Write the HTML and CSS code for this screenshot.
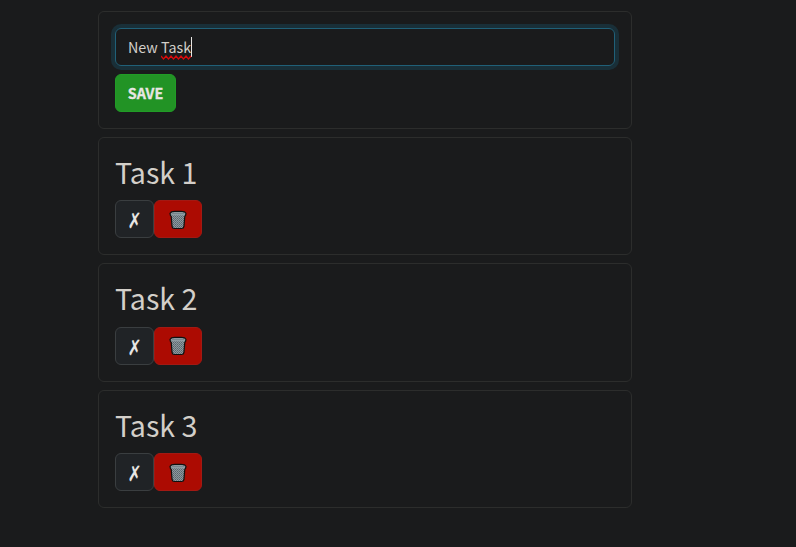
FILE: index.html
```html
<!DOCTYPE html>
<html lang="en">
<head>
<meta charset="utf-8">
<title>Tasks</title>
<link rel="stylesheet" href="styles.css">
</head>
<body>
<svg class="defs" width="0" height="0" aria-hidden="true">
  <defs>
    <pattern id="mesh" width="2" height="2" patternUnits="userSpaceOnUse">
      <rect width="2" height="2" fill="#8d999f"/>
      <rect width="1" height="1" fill="#5a666c"/>
      <rect x="1" y="1" width="1" height="1" fill="#66727a"/>
    </pattern>
    <symbol id="trash" viewBox="0 0 18 20">
      <path d="M1 3.4 2.4 1.9 6 1.3h6l3.6.6L17 3.4l-.4 2-.8.9-.9 10.4c-.2 1.2-1 1.8-2.1 1.8H5.2c-1.1 0-1.9-.6-2.1-1.8L2.2 6.3l-.8-.9z" fill="url(#mesh)" stroke="#101010" stroke-width="1.2" stroke-linejoin="round"/>
      <path d="M2 3.2 5.3 2.1h7.4L16 3.2l-.4 2H2.4z" fill="#8e9ca3"/>
      <path d="M3 3.4h12" stroke="#6b797f" stroke-width=".7"/>
    </symbol>
  </defs>
</svg>
<main class="list">
  <form class="card form">
    <div class="input" role="textbox"><span>New&nbsp;</span><span class="misspelt">Task<svg class="wave" width="31" height="5" viewBox="0 0 31 5"><path d="M0 1 2.5 4 5 1 7.5 4 10 1 12.5 4 15 1 17.5 4 20 1 22.5 4 25 1 27.5 4 30 1" fill="none" stroke="#d80b0b" stroke-width="1.2"/></svg></span><span class="caret"></span></div>
    <button type="button" class="btn save">SAVE</button>
  </form>
  <article class="card">
    <h2>Task 1</h2>
    <div class="actions"><button class="btn mark"><span class="cross">✗</span></button><button class="btn delete" aria-label="Delete"><svg class="icon"><use href="#trash"/></svg></button></div>
  </article>
  <article class="card">
    <h2>Task 2</h2>
    <div class="actions"><button class="btn mark"><span class="cross">✗</span></button><button class="btn delete" aria-label="Delete"><svg class="icon"><use href="#trash"/></svg></button></div>
  </article>
  <article class="card">
    <h2>Task 3</h2>
    <div class="actions"><button class="btn mark"><span class="cross">✗</span></button><button class="btn delete" aria-label="Delete"><svg class="icon"><use href="#trash"/></svg></button></div>
  </article>
</main>
</body>
</html>
```

FILE: styles.css
```css
* { box-sizing: border-box; }
body {
  margin: 0;
  background: #1a1b1c;
  color: #d3cfc9;
  font-family: "Noto Sans CJK JP", "Noto Sans", sans-serif;
  font-size: 14.3px;
}
.defs { position: absolute; }
.list {
  width: 534px;
  margin: 11px 0 0 98px;
  display: flex;
  flex-direction: column;
  gap: 8px;
}
.card {
  padding: 16px;
  border: 1px solid #2c2d2c;
  border-radius: 6px;
}
.form {
  display: flex;
  flex-direction: column;
  align-items: flex-start;
  gap: 8px;
}
.input {
  display: flex;
  align-items: center;
  width: 100%;
  height: 38px;
  padding: 0 12px;
  border: 1px solid #206078;
  border-radius: 6px;
  box-shadow: 0 0 0 4px #192f38;
  line-height: 24px;
}
.misspelt { position: relative; }
.wave { position: absolute; left: 0; bottom: -1px; }
.caret { width: 1px; height: 20px; background: #e8e6e3; }
h2 {
  margin: 0 0 8px;
  height: 38.4px;
  font-size: 28.6px;
  font-weight: 400;
  line-height: 36.4px;
}
.actions { display: flex; }
.btn {
  display: flex;
  align-items: center;
  justify-content: center;
  height: 38px;
  padding: 0;
  border: 1px solid;
  border-radius: 6px;
  color: #e8e6e3;
  font: 700 14.3px/24px "Noto Sans CJK JP", sans-serif;
}
.save {
  width: 61px;
  background: #229325;
  border-color: #219c26;
  -webkit-text-stroke: 0.3px #e8e6e3;
}
.mark { width: 39px; background: #202326; border-color: #3a3e40; }
.cross {
  font: 700 17px/24px "DejaVu Sans", sans-serif;
  transform: translateY(1px) scaleY(1.25);
}
.delete { width: 48px; background: #ac0b02; border-color: #a31913; }
.icon { width: 18px; height: 20px; margin-top: 1px; }
```
